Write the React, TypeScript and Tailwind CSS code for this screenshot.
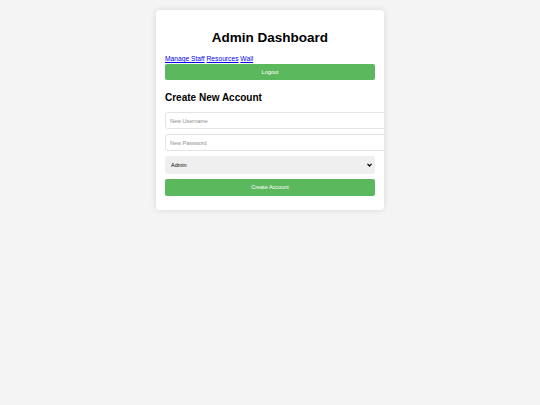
import React from "react";

export default function App() {
  return (
    <div className="min-h-[405px] w-full bg-[#f4f4f4] pt-[10px]" style={{ fontFamily: '"Liberation Sans", Arial, sans-serif' }}>
      <div className="mx-auto w-[228px] overflow-hidden rounded-[4px] bg-white px-[9px] pt-[9px] pb-[14px] shadow-[0_0_6px_rgba(0,0,0,0.12)]">
        <h1 className="mt-[10px] text-center text-[13.5px] font-bold leading-[18px] text-black">Admin Dashboard</h1>
        <div className="mt-[7px] text-[6.7px] leading-[9px]">
          <a href="#" className="text-[#0000ee] underline">Manage Staff</a>{" "}
          <a href="#" className="text-[#0000ee] underline">Resources</a>{" "}
          <a href="#" className="text-[#0000ee] underline">Wall</a>
        </div>
        <button className="mt-[1px] flex h-[16px] w-full items-center justify-center rounded-[2px] bg-[#5cb85c] text-[5.5px] text-white">Logout</button>
        <h2 className="mt-[10px] text-[10px] font-bold leading-[15px] text-black">Create New Account</h2>
        <input
          placeholder="New Username"
          className="mt-[7px] block h-[17px] w-[226px] rounded-[3px] border border-[#e4e4e4] bg-white px-[4px] text-[5.5px] text-black placeholder:text-[#909090] outline-none"
        />
        <input
          placeholder="New Password"
          type="text"
          className="mt-[5px] block h-[17px] w-[226px] rounded-[3px] border border-[#e4e4e4] bg-white px-[4px] text-[5.5px] text-black placeholder:text-[#909090] outline-none"
        />
        <div className="relative mt-[5px] flex h-[18px] w-full items-center rounded-[3px] bg-[#efefef] px-[6px] text-[5.5px] text-black">
          <span>Admin</span>
          <svg className="absolute right-[3px] top-[7px]" width="5" height="4" viewBox="0 0 5 4">
            <path d="M0.5 0.8 L2.5 3 L4.5 0.8" stroke="#000" strokeWidth="1.2" fill="none" />
          </svg>
        </div>
        <button className="mt-[5px] flex h-[17px] w-full items-center justify-center rounded-[2px] bg-[#5cb85c] text-[5.5px] text-white">Create Account</button>
      </div>
    </div>
  );
}
